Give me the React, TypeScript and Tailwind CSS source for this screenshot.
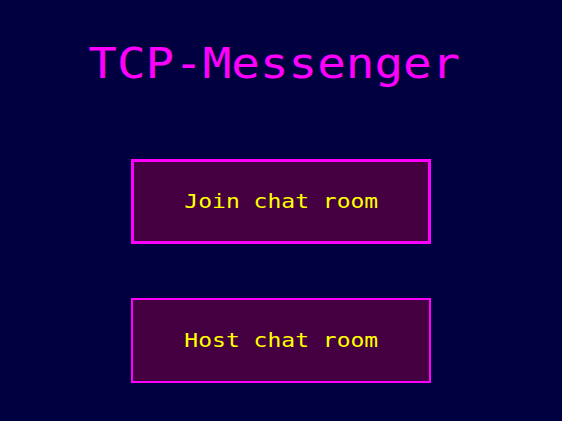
export default function App() {
    const font = { fontFamily: '"DejaVu Sans Mono", monospace' };
    return (
        <div className="w-[562px] h-[421px] bg-[#000040] flex flex-col items-center" style={font}>
            <h1 className="mt-[38px] mr-[13px] text-[43px] leading-[50px] text-[#ff00ff]">
                <span className="inline-block scale-x-[1.105]">TCP-Messenger</span>
            </h1>
            <button className="mt-[71px] w-[300px] h-[85px] pb-[2px] border-[3px] border-[#ff00ff] bg-[#440040] text-[#ffff00] text-[20px]">
                <span className="inline-block scale-x-[1.15]">Join chat room</span>
            </button>
            <button className="mt-[54px] w-[300px] h-[85px] pb-[2px] border-2 border-[#ff00ff] bg-[#440040] text-[#ffff00] text-[20px]">
                <span className="inline-block scale-x-[1.15]">Host chat room</span>
            </button>
        </div>
    );
}
